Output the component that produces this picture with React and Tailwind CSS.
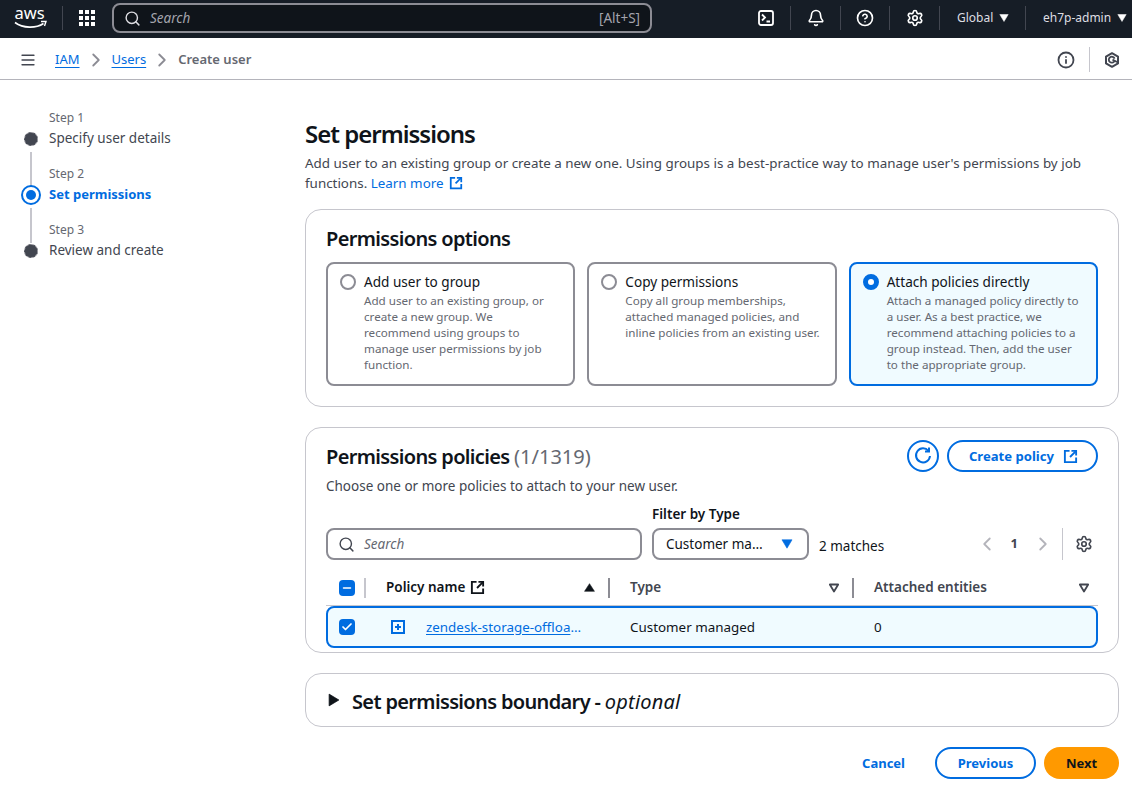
import React from 'react';
import { Search, Bell, CircleHelp, Settings, Menu, ChevronRight, ChevronLeft, Info, Check, Minus } from 'lucide-react';

const Caret = ({ className = '', hollow = false, up = false, size = 10 }) => (
  <svg width={size} height={size} viewBox="0 0 10 10" className={className}>
    <path
      d={up ? 'M5 1.5 L9.5 8.5 H0.5 Z' : 'M0.8 1.5 H9.2 L5 8.5 Z'}
      fill={hollow ? 'none' : 'currentColor'}
      stroke="currentColor"
      strokeWidth={hollow ? 1.8 : 0.5}
      strokeLinejoin="round"
    />
  </svg>
);

const External = ({ className = '', size = 16 }) => (
  <svg width={size} height={size} viewBox="0 0 16 16" fill="none" stroke="currentColor" strokeWidth="2" className={className}>
    <path d="M7 2 H2 V14 H14 V9" />
    <path d="M9 2 H14 V7" />
    <path d="M14 2 L7.5 8.5" />
  </svg>
);

const NavDivider = () => <div className="w-px h-6 bg-[#424650]" />;

// --- Top bar ---
const TopNav = () => (
  <div className="h-[38px] bg-[#161d26] flex items-center pb-[2px] text-[#dedee3] shrink-0">
    <div className="w-[62px] pl-[14px]">
      <svg width="34" height="26" viewBox="0 0 34 26" className="block overflow-visible">
        <text x="0.5" y="13.5" fontSize="16.5" fill="#fff" fontFamily="'Noto Sans', sans-serif">aws</text>
        <path d="M1 17.5 C9 23.5 22 23.5 29.5 18.5" fill="none" stroke="#fff" strokeWidth="1.6" />
        <path d="M27 16.5 L32 16.5 L30.5 21" fill="none" stroke="#fff" strokeWidth="1.4" />
      </svg>
    </div>
    <NavDivider />
    <div className="ml-4 grid grid-cols-3 gap-[2px] w-4">
      {Array.from({ length: 9 }).map((_, i) => (
        <div key={i} className="w-1 h-1 bg-white" />
      ))}
    </div>
    <div className="ml-[17px] w-[540px] h-[30px] rounded-lg border-2 border-[#8c8c94] bg-[#0f141a] flex items-center px-[10px]">
      <Search size={17} strokeWidth={2} className="text-[#dedee3]" />
      <span className="ml-[9px] text-[13.5px] italic text-[#a4a4ad]">Search</span>
      <span className="ml-auto text-[13.5px] text-[#a4a4ad]">[Alt+S]</span>
    </div>
    <div className="ml-auto flex items-center">
      <div className="w-[50px] pl-[1px] flex justify-center">
        <svg width="16" height="16" viewBox="0 0 16 16" fill="none" stroke="#fff" strokeWidth="1.8">
          <rect x="1" y="1" width="14" height="14" rx="2" />
          <path d="M4 4.5 L7 7.5 L4 10.5 M8.5 11.5 H12" />
        </svg>
      </div>
      <NavDivider />
      <div className="w-[49px] flex justify-center"><Bell size={18} strokeWidth={2.2} className="text-white" /></div>
      <NavDivider />
      <div className="w-[48px] flex justify-center"><CircleHelp size={18} strokeWidth={2.2} className="text-white" /></div>
      <NavDivider />
      <div className="w-[49px] flex justify-center"><Settings size={18} strokeWidth={2.2} className="text-white" /></div>
      <NavDivider />
      <div className="w-[85px] flex items-center pl-[17px] gap-[6px] text-[12px]">
        Global <Caret size={10} className="text-white" />
      </div>
      <NavDivider />
      <div className="w-[106px] flex items-center pl-[17px] gap-[6px] text-[12px]">
        eh7p-admin <Caret size={10} className="text-white" />
      </div>
    </div>
  </div>
);

// --- Breadcrumb bar ---
const Breadcrumbs = () => (
  <div className="h-[42px] bg-white border-b border-[#b4b4bb] flex items-center pt-[2px] pl-5 pr-[11px] shrink-0">
    <Menu size={16} strokeWidth={2.2} className="text-[#424650] scale-x-110" />
    <a className="ml-[19px] text-[13px] text-[#006ce0] underline underline-offset-[3px]">IAM</a>
    <ChevronRight size={22} strokeWidth={2} className="mx-[5px] text-[#8c8c94]" />
    <a className="text-[13px] text-[#006ce0] underline underline-offset-[3px]">Users</a>
    <ChevronRight size={22} strokeWidth={2} className="mx-[5px] text-[#8c8c94]" />
    <span className="text-[13px] font-semibold text-[#656871]">Create user</span>
    <div className="ml-auto flex items-center">
      <Info size={18} strokeWidth={2.4} className="text-[#424650] -ml-[1px]" />
      <div className="mx-[14px] w-px h-[25px] bg-[#c6c6cd]" />
      <svg width="16" height="16" viewBox="0 0 16 16" fill="none" stroke="#424650" className="mr-[1px]">
        <path d="M8 1.2 L14 4.6 V11.4 L8 14.8 L2 11.4 V4.6 Z" strokeWidth="2" strokeLinejoin="round" />
        <path d="M10.4 9.2 A3 3 0 1 1 10.6 6.6 M8.5 7.6 L13.5 10.2" strokeWidth="1.8" />
      </svg>
    </div>
  </div>
);

// --- Wizard steps ---
const Step = ({ n, title, active, last }) => (
  <div className="relative h-[56px] pl-[49px]">
    <div className="text-[12px] leading-4 pt-[6px] h-[24px] text-[#656871]">Step {n}</div>
    <div className={`leading-5 ${active ? 'font-bold text-[#006ce0] text-[13px]' : 'text-[13.5px] text-[#424650]'}`}>{title}</div>
    {active ? (
      <div className="absolute left-[21px] top-[25px] w-5 h-5 rounded-full border-2 border-[#006ce0] bg-white flex items-center justify-center">
        <div className="w-[10px] h-[10px] rounded-full bg-[#006ce0]" />
      </div>
    ) : (
      <div className="absolute left-[24px] top-[28px] w-[14px] h-[14px] rounded-full bg-[#424650] border border-dashed border-[#8c8c94]" />
    )}
    {!last && <div className="absolute left-[30px] top-[48px] w-[2px] h-[35px] bg-[#c6c6cd]" />}
  </div>
);

const Sidebar = () => (
  <div className="w-[305px] shrink-0 pt-[24px]">
    <Step n={1} title="Specify user details" />
    <Step n={2} title="Set permissions" active />
    <Step n={3} title="Review and create" last />
  </div>
);

// --- Option tile ---
const OptionTile = ({ title, desc, selected }) => (
  <div className={`flex-1 h-[124px] rounded-lg border-2 pl-[12px] pt-[8px] flex ${selected ? 'border-[#006ce0] bg-[#f0fbff]' : 'border-[#8c8c94] bg-white'}`}>
    {selected ? (
      <div className="w-4 h-4 mt-[2px] rounded-full border-[5px] border-[#006ce0] bg-white shrink-0" />
    ) : (
      <div className="w-4 h-4 mt-[2px] rounded-full border-2 border-[#8c8c94] bg-white shrink-0" />
    )}
    <div className="ml-2 w-[197px]">
      <div className="text-[13.6px] leading-[20px] mb-[1px] text-[#0f141a]">{title}</div>
      <div className="text-[11.65px] leading-4 text-[#656871]">{desc}</div>
    </div>
  </div>
);

const PolicyTable = () => (
  <div className="mt-[10px]">
    <div className="h-[36px] flex items-center border-b border-[#c6c6cd] text-[13.5px] font-semibold">
      <div className="w-[60px] flex items-center pl-[13px]">
        <div className="w-4 h-4 rounded-[4px] bg-[#006ce0] flex items-center justify-center">
          <Minus size={12} strokeWidth={3} className="text-white" />
        </div>
        <div className="ml-[9px] w-[2px] h-5 bg-[#c6c6cd]" />
      </div>
      <div className="w-[222px] flex items-center text-[#0f141a]">
        <span className="pb-[1px]">Policy name</span>
        <External size={15} className="ml-[5px]" />
        <Caret up size={11} className="ml-auto mr-[13px]" />
      </div>
      <div className="w-[2px] h-5 bg-[#8c8c94]" />
      <div className="w-[242px] flex items-center pl-[20px] text-[#424650]">
        <span>Type</span>
        <Caret hollow size={10} className="ml-auto mr-[13px]" />
      </div>
      <div className="w-[2px] h-5 bg-[#8c8c94]" />
      <div className="flex-1 flex items-center pl-[20px] text-[#424650]">
        <span>Attached entities</span>
        <Caret hollow size={10} className="ml-auto mr-[9px]" />
      </div>
    </div>
    <div className="h-[42px] rounded-lg border-2 border-[#006ce0] bg-[#f0fbff] flex items-center text-[13.4px] text-[#0f141a]">
      <div className="w-[58px] pl-[11px]">
        <div className="w-4 h-4 rounded-[4px] bg-[#006ce0] flex items-center justify-center">
          <Check size={12} strokeWidth={3.5} className="text-white" />
        </div>
      </div>
      <svg width="14" height="14" viewBox="0 0 14 14" fill="none" stroke="#006ce0" strokeWidth="2" className="ml-[5px] shrink-0">
        <rect x="1" y="1" width="12" height="12" />
        <path d="M7 4 V10 M4 7 H10" />
      </svg>
      <div className="ml-[21px] w-[161px] truncate text-[#006ce0] underline underline-offset-2">zendesk-storage-offload-policy</div>
      <div className="ml-[43px] w-[244px]">Customer managed</div>
      <div>0</div>
    </div>
  </div>
);

const App = () => (
  <div className="w-[1132px] h-[795px] overflow-hidden bg-white flex flex-col font-['Noto_Sans',sans-serif] text-[#0f141a]">
    <TopNav />
    <Breadcrumbs />
    <div className="flex flex-1">
      <Sidebar />
      <div className="w-[814px] pt-[39px]">
        <h1 className="text-[24px] leading-[30px] font-semibold tracking-[-1px]">Set permissions</h1>
        <p className="mt-[4px] text-[13.4px] leading-5 text-[#424650]">
          Add user to an existing group or create a new one. Using groups is a best-practice way to manage user's permissions by job functions.{' '}
          <a className="text-[#006ce0]">Learn more</a>
          <External size={14} className="inline ml-[5px] align-[-2px] text-[#006ce0]" />
        </p>

        <section className="mt-[16px] h-[198px] rounded-2xl border border-[#c6c6cd] px-5 pt-[17px]">
          <h2 className="text-[20px] leading-6 font-semibold tracking-[-0.65px]">Permissions options</h2>
          <div className="mt-[11px] flex gap-3">
            <OptionTile title="Add user to group" desc="Add user to an existing group, or create a new group. We recommend using groups to manage user permissions by job function." />
            <OptionTile title="Copy permissions" desc="Copy all group memberships, attached managed policies, and inline policies from an existing user." />
            <OptionTile selected title="Attach policies directly" desc="Attach a managed policy directly to a user. As a best practice, we recommend attaching policies to a group instead. Then, add the user to the appropriate group." />
          </div>
        </section>

        <section className="mt-[20px] h-[226px] rounded-2xl border border-[#c6c6cd] px-5 pt-[12px]">
          <div className="flex items-start">
            <div className="pt-[5px]">
              <h2 className="text-[20px] leading-6 font-semibold tracking-[-0.65px]">
                Permissions policies <span className="font-normal tracking-normal text-[#656871]">(1/1319)</span>
              </h2>
              <p className="mt-[7px] text-[13.5px] leading-5 text-[#424650]">Choose one or more policies to attach to your new user.</p>
            </div>
            <div className="ml-auto flex gap-2">
              <button className="w-8 h-8 rounded-full border-2 border-[#006ce0] flex items-center justify-center">
                <svg width="20" height="20" viewBox="0 0 20 20" fill="none" stroke="#006ce0" strokeWidth="2">
                  <path d="M15.5 5 A7 7 0 1 0 17 10" />
                  <path d="M16 1.5 V5.5 H12" />
                </svg>
              </button>
              <button className="h-8 w-[151px] pl-[2px] pt-[1px] rounded-full border-2 border-[#006ce0] flex items-center justify-center text-[#006ce0] text-[13.1px] font-bold">
                Create policy <External size={15} className="ml-[9px] -mt-[1px]" />
              </button>
            </div>
          </div>

          <div className="mt-[8px] flex items-end">
            <div className="w-[316px] h-8 rounded-lg border-2 border-[#8c8c94] flex items-center pl-[10px]">
              <Search size={17} strokeWidth={2} className="text-[#424650]" />
              <span className="ml-[9px] text-[13.5px] italic text-[#656871]">Search</span>
            </div>
            <div className="ml-[10px]">
              <div className="text-[13.5px] leading-5 font-semibold text-[#0f141a] mb-[4px]">Filter by Type</div>
              <div className="w-[157px] h-8 rounded-lg border-2 border-[#8c8c94] flex items-center pl-[12px] pr-[12px] text-[13.5px] text-[#0f141a]">
                <span className="truncate w-[100px]">Customer managed</span>
                <Caret size={12} className="ml-auto mr-[2px] text-[#006ce0]" />
              </div>
            </div>
            <div className="ml-[10px] text-[13.5px] leading-5 h-[24px] text-[#0f141a]">2 matches</div>
            <div className="ml-auto h-8 flex items-center text-[#424650]">
              <ChevronLeft size={22} strokeWidth={2} className="text-[#b4b4bb]" />
              <span className="mx-[13px] text-[13px] font-bold">1</span>
              <ChevronRight size={22} strokeWidth={2} className="text-[#b4b4bb] ml-[1px]" />
              <div className="ml-[8px] w-px h-8 bg-[#c6c6cd]" />
              <Settings size={18} strokeWidth={2.2} className="ml-[12px] mr-[5px]" />
            </div>
          </div>

          <PolicyTable />
        </section>

        <section className="mt-[20px] h-[54px] rounded-2xl border border-[#c6c6cd] pl-[21px] flex items-center">
          <Caret size={14} className="-rotate-90" />
          <h2 className="ml-[11px] pt-[4px] text-[20px] font-semibold tracking-[-0.65px]">
            Set permissions boundary - <span className="italic font-normal tracking-[0.2px]">optional</span>
          </h2>
        </section>

        <div className="mt-[20px] flex items-center justify-end text-[13px] font-bold">
          <a className="text-[#006ce0] pt-[1px]">Cancel</a>
          <button className="ml-[30px] w-[101px] h-8 pt-[1px] rounded-full border-2 border-[#006ce0] text-[#006ce0]">Previous</button>
          <button className="ml-2 w-[75px] h-8 pt-[1px] rounded-full bg-[#ff9900] text-[#0f141a]">Next</button>
        </div>
      </div>
    </div>
  </div>
);

export default App;
